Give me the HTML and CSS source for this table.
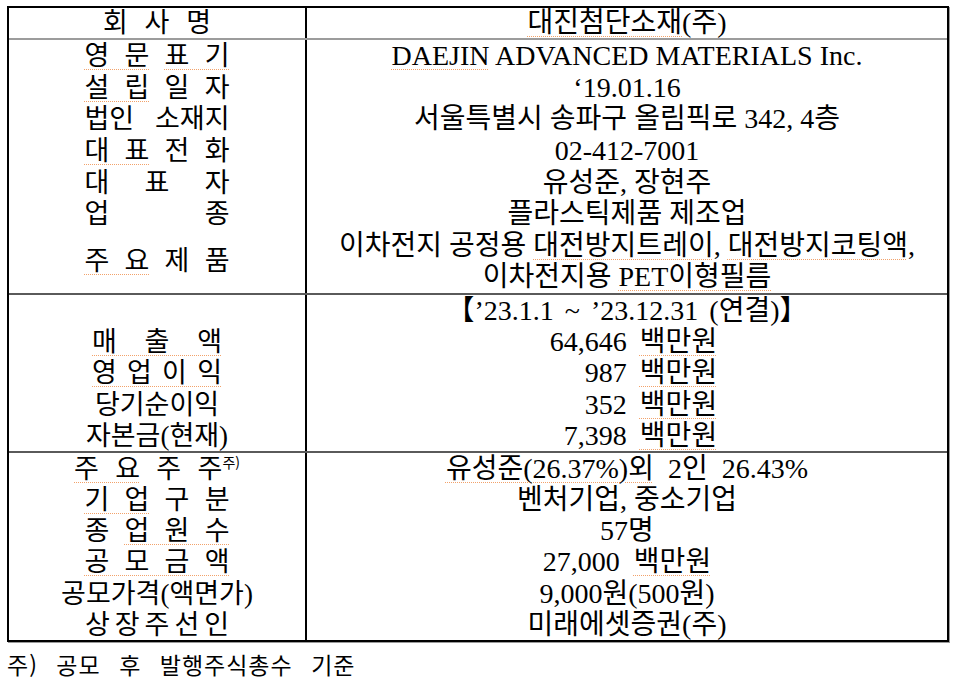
FILE: index.html
```html
<!DOCTYPE html>
<html lang="ko">
<head>
<meta charset="utf-8">
<title>회사 개요</title>
<link rel="stylesheet" href="styles.css">
</head>
<body>
<div class="sheet">
  <div class="head">
    <div class="c k"><span class="lbl w108">회 사 명</span></div>
    <div class="c v"><span class="mk">대진첨단소재</span>(주)</div>
  </div>

  <div class="sec s1">
    <div class="c k"><span class="lbl"><span class="mk">영 문</span> <span class="mk">표 기</span></span></div>
    <div class="c v"><span class="mk">DAEJIN</span> ADVANCED MATERIALS Inc.</div>

    <div class="c k"><span class="lbl"><span class="mk">설 립</span> 일 자</span></div>
    <div class="c v">‘19.01.16</div>

    <div class="c k"><span class="lbl">법인 소재지</span></div>
    <div class="c v">서울특별시 송파구 올림픽로 342, 4층</div>

    <div class="c k"><span class="lbl"><span class="mk">대 표</span> 전 화</span></div>
    <div class="c v">02-412-7001</div>

    <div class="c k"><span class="lbl">대 표 자</span></div>
    <div class="c v">유성준, 장현주</div>

    <div class="c k"><span class="lbl">업 종</span></div>
    <div class="c v">플라스틱제품 제조업</div>

    <div class="c k span2"><span class="lbl"><span class="mk">주 요</span> 제 품</span></div>
    <div class="c v">이차전지 공정용 <span class="mk">대전방지트레이</span>, <span class="mk">대전방지코팅액</span>,</div>
    <div class="c v">이차전지용 <span class="mk">PET이형필름</span></div>
  </div>

  <div class="sec s2">
    <div class="c k"></div>
    <div class="c v period">【’23.1.1 ~ ’23.12.31 (연결)】</div>

    <div class="c k"><span class="lbl w130"><span class="mk">매 출 액</span></span></div>
    <div class="c v"><span class="amt"><span class="num">64,646</span><span class="mk">백만원</span></span></div>

    <div class="c k"><span class="lbl w130"><span class="mk">영 업 이 익</span></span></div>
    <div class="c v"><span class="amt"><span class="num">987</span><span class="mk">백만원</span></span></div>

    <div class="c k">당기순이익</div>
    <div class="c v"><span class="amt"><span class="num">352</span><span class="mk">백만원</span></span></div>

    <div class="c k">자본금(현재)</div>
    <div class="c v"><span class="amt"><span class="num">7,398</span><span class="mk">백만원</span></span></div>
  </div>

  <div class="sec s3">
    <div class="c k"><span class="lbl w166"><span class="mk">주 요</span> 주 주<sup class="fn">주)</sup></span></div>
    <div class="c v"><span class="mk">유성준(26.37%)외</span>&nbsp; 2인&nbsp; 26.43%</div>

    <div class="c k"><span class="lbl"><span class="mk">기 업</span> 구 분</span></div>
    <div class="c v">벤처기업, 중소기업</div>

    <div class="c k"><span class="lbl">종 <span class="mk">업 원 수</span></span></div>
    <div class="c v">57명</div>

    <div class="c k"><span class="lbl"><span class="mk">공 모 금 액</span></span></div>
    <div class="c v">27,000&nbsp; <span class="mk">백만원</span></div>

    <div class="c k">공모가격(액면가)</div>
    <div class="c v">9,000원(500원)</div>

    <div class="c k"><span class="spread">상장주선인</span></div>
    <div class="c v">미래에셋증권(주)</div>
  </div>
</div>

<p class="note">주) 공모 후 발행주식총수 기준</p>
</body>
</html>
```

FILE: styles.css
```css
html, body {
  margin: 0;
  background: #ffffff;
}

body {
  padding: 6px 0 0 7px;
  font-family: "Liberation Serif", "Noto Sans CJK KR", serif;
  font-size: 27px;
  color: #000000;
}

.sheet {
  box-sizing: border-box;
  width: 942px;
  border: 2px solid #000000;
  box-shadow: 1px 1px 0 #9a9a9a;
}

.head,
.sec {
  display: grid;
  grid-template-columns: 298px 1fr;
}

.head {
  box-sizing: border-box;
  height: 32px;
  grid-auto-rows: 30px;
  border-bottom: 2px solid #9c9c9c;
}

.s1 { grid-auto-rows: 31.625px; }
.s2 { grid-auto-rows: 31.2px; border-top: 2px solid #5a5a5a; }
.s3 { grid-auto-rows: 31.17px; border-top: 2px solid #5a5a5a; }

.c {
  display: block;
  text-align: center;
  white-space: nowrap;
  line-height: 30px;
  padding-top: 1px;
}

.head .c {
  padding-top: 0;
}

.k {
  box-sizing: border-box;
  grid-column: 1;
  border-right: 2px solid #000000;
}

.v {
  grid-column: 2;
  font-size: 28px;
}

.span2 {
  grid-row: span 2;
  display: flex;
  align-items: center;
  justify-content: center;
  padding-top: 0;
}

.lbl {
  display: inline-block;
  width: 145px;
  text-align: justify;
  text-align-last: justify;
  vertical-align: top;
}

.lbl.w108 { width: 108px; }
.lbl.w130 { width: 130px; }
.lbl.w166 { width: 166px; }

.spread {
  letter-spacing: 5px;
  padding-left: 5px;
}

.mk {
  text-decoration-line: underline;
  text-decoration-style: dotted;
  text-decoration-color: #f2a26a;
  text-decoration-thickness: 1px;
  text-underline-offset: 4px;
}

.fn {
  font-family: "Noto Sans CJK KR", sans-serif;
  font-size: 14px;
  line-height: 0;
  vertical-align: 10px;
}

.period {
  word-spacing: 4px;
}

.amt {
  display: inline-grid;
  grid-template-columns: 90px auto;
  column-gap: 13px;
  vertical-align: top;
}

.amt .num {
  text-align: right;
}

.note {
  margin: 7px 0 0 0;
  font-family: "Noto Sans CJK KR", sans-serif;
  font-size: 23px;
  line-height: 30px;
  letter-spacing: 1px;
  word-spacing: 11px;
}
```
